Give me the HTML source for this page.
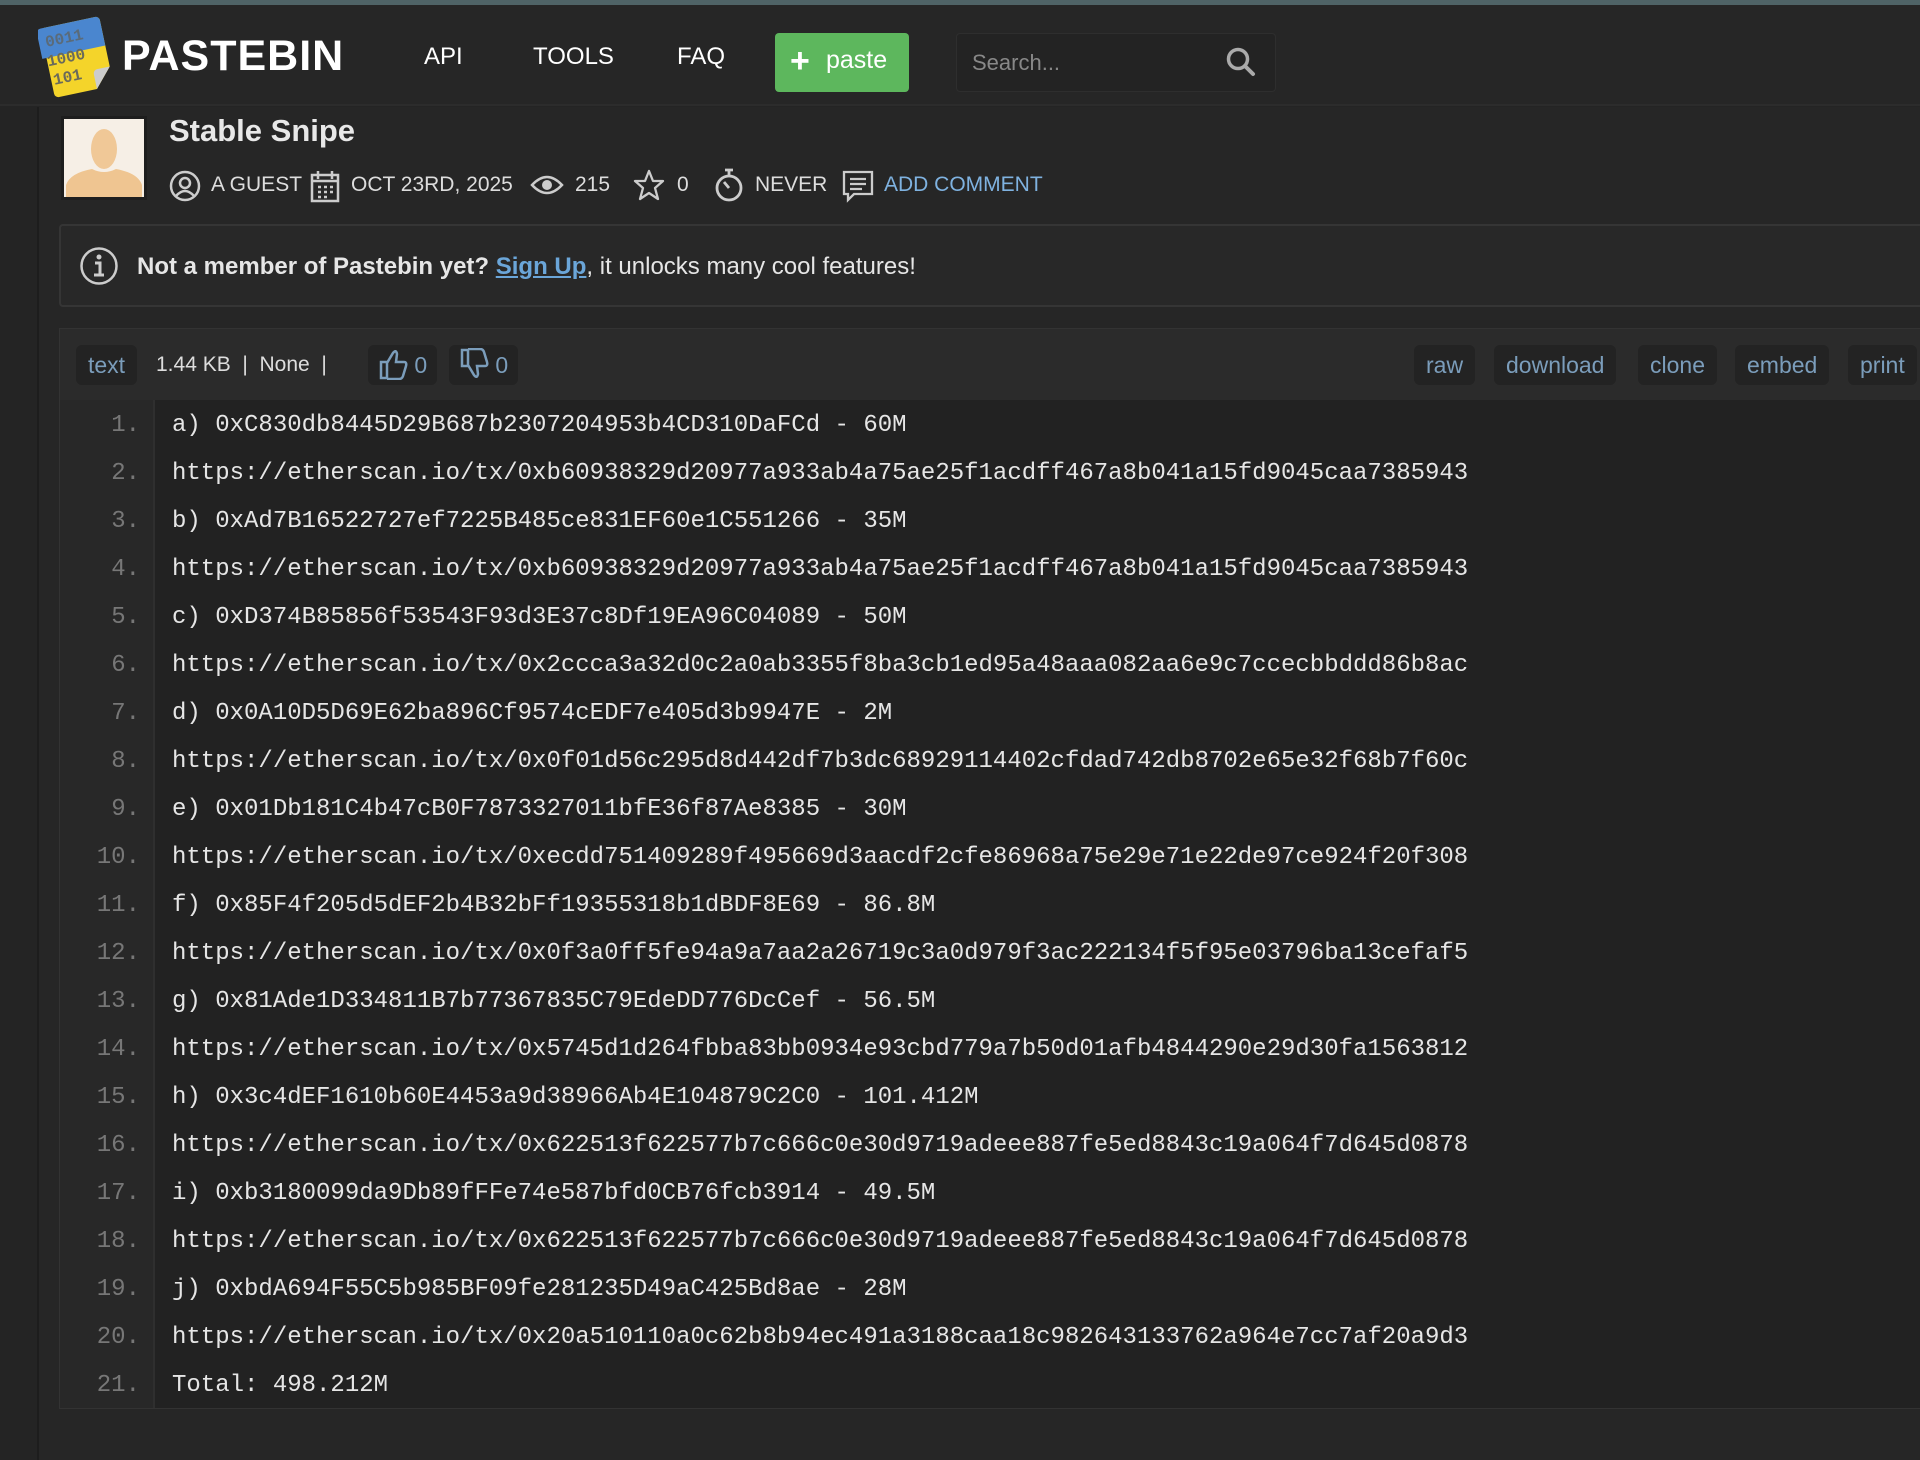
<!DOCTYPE html>
<html><head><meta charset="utf-8"><style>
*{margin:0;padding:0;box-sizing:border-box}
body{width:1920px;height:1460px;background:#242424;font-family:"Liberation Sans",sans-serif;color:#ddd;position:relative;overflow:hidden}
.top{position:absolute;left:0;top:0;width:1920px;height:5px;background:#4f6366}
.hdr{position:absolute;left:0;top:5px;width:1920px;height:101px;background:#262626;border-bottom:2px solid #2c2c2c}
.a{position:absolute;white-space:nowrap}
.side{position:absolute;left:37px;top:107px;width:2px;height:1353px;background:#1d1d1d}
.main{position:absolute;left:39px;top:107px;width:1881px;height:1353px;background:#262626}
.nav{font-size:24px;color:#fff;top:38px}
.btn{left:775px;top:28px;width:134px;height:59px;background:#5db75d;border-radius:4px;color:#fff;font-size:25px}
.search{left:956px;top:28px;width:320px;height:59px;background:#232323;border:1px solid #2e2e2e;border-radius:4px}
.meta{top:173px;font-size:21px;color:#ddd}
.note{left:59px;top:224px;width:1870px;height:83px;border:2px solid #353535;border-radius:4px;background:#282828}
.ch{left:59px;top:328px;width:1870px;height:72px;background:#2b2b2b;border:1px solid #333;border-bottom:none}
.pill{position:absolute;top:16px;height:40px;background:#232323;border-radius:6px;color:#7b9dbb;font-size:23px;line-height:40px;padding:0 12px}
.code{left:59px;top:400px;width:1870px;height:1009px;background:#222;border:1px solid #333;border-top:none}
.nums{position:absolute;left:0;top:0;width:95px;height:1008px;background:#282828;border-right:2px solid #2f2f2f}
.ln{position:absolute;font-family:"Liberation Mono",monospace;font-size:24px;white-space:pre;line-height:48px}
.ln.n{color:#777;text-align:right;width:80px}
.ln.c{left:112px;color:#e6e6e6}
</style></head><body>
<div class="top"></div>
<div class="hdr">
 <svg class="a" style="left:38px;top:8px" width="78" height="88" viewBox="0 0 72 82">
  <g transform="rotate(-12 36 41)">
   <path d="M8 8 h52 a4 4 0 0 1 4 4 v44 l-16 18 h-36 a4 4 0 0 1 -4 -4 v-58 a4 4 0 0 1 4 -4z" fill="#f4d42a"/>
   <path d="M8 8 h52 a4 4 0 0 1 4 4 v24 h-60 v-24 a4 4 0 0 1 4 -4z" fill="#4a86cf"/>
   <path d="M64 56 l-16 18 v-14 a4 4 0 0 1 4 -4z" fill="#ccc"/>
   <text x="10" y="26" font-family="Liberation Mono" font-weight="bold" font-size="15" fill="#5a6b7a">0011</text>
   <text x="8" y="44" font-family="Liberation Mono" font-weight="bold" font-size="15" fill="#6a6a5a">1000</text>
   <text x="10" y="62" font-family="Liberation Mono" font-weight="bold" font-size="15" fill="#6a6a5a">101</text>
  </g>
 </svg>
 <div class="a" style="left:122px;top:27px;font-size:43px;font-weight:bold;color:#fff;letter-spacing:1px">PASTEBIN</div>
 <div class="a nav" style="left:424px">API</div>
 <div class="a nav" style="left:533px">TOOLS</div>
 <div class="a nav" style="left:677px">FAQ</div>
 <div class="a btn"><span style="position:absolute;left:15px;top:11px;font-size:34px;font-weight:bold;line-height:34px">+</span><span style="position:absolute;left:51px;top:13px">paste</span></div>
 <div class="a search"><span style="position:absolute;left:15px;top:16px;font-size:22px;color:#888">Search...</span>
  <svg style="position:absolute;left:268px;top:12px" width="32" height="32" viewBox="0 0 32 32"><circle cx="13" cy="13" r="9.5" stroke="#aaa" stroke-width="3.5" fill="none"/><path d="M20 20 L28 28" stroke="#aaa" stroke-width="4" stroke-linecap="round"/></svg></div>
</div>
<div class="side"></div>
<div class="main"></div>
<div class="a" style="left:61px;top:116px;width:86px;height:84px;background:#1e1e1e;padding:3px">
 <svg width="80" height="78" viewBox="0 0 80 78"><rect width="80" height="78" fill="#f6efe6"/><ellipse cx="40" cy="30" rx="13" ry="20" fill="#f0c897"/><path d="M2 78 v-12 q4 -12 26 -16 q12 6 24 0 q22 4 26 16 v12z" fill="#efc591"/></svg>
</div>
<div class="a" style="left:169px;top:113px;font-size:31px;font-weight:bold;color:#e8e8e8">Stable Snipe</div>
<svg class="a" style="left:169px;top:170px" width="32" height="32" viewBox="0 0 32 32"><circle cx="16" cy="16" r="14" stroke="#ccc" stroke-width="2.5" fill="none"/><circle cx="16" cy="13" r="5" stroke="#ccc" stroke-width="2.5" fill="none"/><path d="M7 26 q9 -10 18 0" stroke="#ccc" stroke-width="2.5" fill="none"/></svg>
<div class="a meta" style="left:211px">A GUEST</div>
<svg class="a" style="left:310px;top:169px" width="30" height="34" viewBox="0 0 30 34"><rect x="2" y="6" width="26" height="26" stroke="#ccc" stroke-width="2.5" fill="none"/><path d="M2 12 h26 M8 2 v8 M22 2 v8" stroke="#ccc" stroke-width="2.5"/><path d="M8 18h3M14 18h3M20 18h3M8 23h3M14 23h3M20 23h3M8 28h3M14 28h3" stroke="#ccc" stroke-width="2.5"/></svg>
<div class="a meta" style="left:351px">OCT 23RD, 2025</div>
<svg class="a" style="left:530px;top:172px" width="34" height="26" viewBox="0 0 34 26"><path d="M2 13 q15 -16 30 0 q-15 16 -30 0z" stroke="#ccc" stroke-width="2.5" fill="none"/><circle cx="17" cy="13" r="5" fill="#ccc"/></svg>
<div class="a meta" style="left:575px">215</div>
<svg class="a" style="left:633px;top:169px" width="32" height="32" viewBox="0 0 32 32"><path d="M16 2 l4 10 h10 l-8 7 3 11 -9 -6 -9 6 3 -11 -8 -7 h10z" stroke="#ccc" stroke-width="2.3" fill="none" stroke-linejoin="round"/></svg>
<div class="a meta" style="left:677px">0</div>
<svg class="a" style="left:713px;top:167px" width="32" height="36" viewBox="0 0 32 36"><circle cx="16" cy="21" r="12" stroke="#ccc" stroke-width="2.8" fill="none"/><path d="M12 3h8M16 3v6M16 21 l-5 -6" stroke="#ccc" stroke-width="2.8"/></svg>
<div class="a meta" style="left:755px">NEVER</div>
<svg class="a" style="left:842px;top:170px" width="32" height="34" viewBox="0 0 32 34"><path d="M2 2 h28 v22 h-18 l-6 6 v-6 h-4z" stroke="#ccc" stroke-width="2.3" fill="none"/><path d="M8 9h16M8 14h16M8 19h12" stroke="#ccc" stroke-width="2.3"/></svg>
<div class="a meta" style="left:884px;color:#7fb2e0">ADD COMMENT</div>
<div class="a note">
 <svg style="position:absolute;left:18px;top:20px" width="40" height="40" viewBox="0 0 40 40"><circle cx="20" cy="20" r="17.5" stroke="#ccc" stroke-width="2.5" fill="none"/><circle cx="20" cy="11" r="2.5" fill="#ccc"/><path d="M16 17h5v12M15 29h10" stroke="#ccc" stroke-width="3" fill="none"/></svg>
 <div class="a" style="left:76px;top:27px;font-size:24px;font-weight:bold;color:#e6e6e6">Not a member of Pastebin yet? <span style="color:#6ba6d9;text-decoration:underline">Sign Up</span><span style="font-weight:normal">, it unlocks many cool features!</span></div>
</div>
<div class="a ch">
 <div class="pill" style="left:16px">text</div>
 <div class="a" style="left:96px;top:24px;font-size:21px;color:#ddd">1.44 KB &nbsp;|&nbsp; None &nbsp;|</div>
 <div class="pill" style="left:308px;padding:0 10px">
  <svg width="30" height="32" viewBox="0 0 30 32" style="vertical-align:-7px"><path d="M3 14h6v16h-6zM9 15 l6 -10 q3 -4 4 1 l-1 8 h8 q3 0 2 4 l-3 10 q-1 3 -4 3 h-12" stroke="#7b9dbb" stroke-width="2.5" fill="none"/></svg> 0</div>
 <div class="pill" style="left:389px;padding:0 10px">
  <svg width="30" height="32" viewBox="0 0 30 32" style="vertical-align:-7px;transform:scaleY(-1)"><path d="M3 14h6v16h-6zM9 15 l6 -10 q3 -4 4 1 l-1 8 h8 q3 0 2 4 l-3 10 q-1 3 -4 3 h-12" stroke="#7b9dbb" stroke-width="2.5" fill="none"/></svg> 0</div>
 <div class="pill" style="left:1354px">raw</div>
 <div class="pill" style="left:1434px">download</div>
 <div class="pill" style="left:1578px">clone</div>
 <div class="pill" style="left:1675px">embed</div>
 <div class="pill" style="left:1788px">print</div>
</div>
<div class="a code">
 <div class="nums"></div>
 <div class="ln n" style="top:2px;left:0">1.<br>2.<br>3.<br>4.<br>5.<br>6.<br>7.<br>8.<br>9.<br>10.<br>11.<br>12.<br>13.<br>14.<br>15.<br>16.<br>17.<br>18.<br>19.<br>20.<br>21.</div>
 <div class="ln c" style="top:2px">a) 0xC830db8445D29B687b2307204953b4CD310DaFCd - 60M
https://etherscan.io/tx/0xb60938329d20977a933ab4a75ae25f1acdff467a8b041a15fd9045caa7385943
b) 0xAd7B16522727ef7225B485ce831EF60e1C551266 - 35M
https://etherscan.io/tx/0xb60938329d20977a933ab4a75ae25f1acdff467a8b041a15fd9045caa7385943
c) 0xD374B85856f53543F93d3E37c8Df19EA96C04089 - 50M
https://etherscan.io/tx/0x2ccca3a32d0c2a0ab3355f8ba3cb1ed95a48aaa082aa6e9c7ccecbbddd86b8ac
d) 0x0A10D5D69E62ba896Cf9574cEDF7e405d3b9947E - 2M
https://etherscan.io/tx/0x0f01d56c295d8d442df7b3dc68929114402cfdad742db8702e65e32f68b7f60c
e) 0x01Db181C4b47cB0F7873327011bfE36f87Ae8385 - 30M
https://etherscan.io/tx/0xecdd751409289f495669d3aacdf2cfe86968a75e29e71e22de97ce924f20f308
f) 0x85F4f205d5dEF2b4B32bFf19355318b1dBDF8E69 - 86.8M
https://etherscan.io/tx/0x0f3a0ff5fe94a9a7aa2a26719c3a0d979f3ac222134f5f95e03796ba13cefaf5
g) 0x81Ade1D334811B7b77367835C79EdeDD776DcCef - 56.5M
https://etherscan.io/tx/0x5745d1d264fbba83bb0934e93cbd779a7b50d01afb4844290e29d30fa1563812
h) 0x3c4dEF1610b60E4453a9d38966Ab4E104879C2C0 - 101.412M
https://etherscan.io/tx/0x622513f622577b7c666c0e30d9719adeee887fe5ed8843c19a064f7d645d0878
i) 0xb3180099da9Db89fFFe74e587bfd0CB76fcb3914 - 49.5M
https://etherscan.io/tx/0x622513f622577b7c666c0e30d9719adeee887fe5ed8843c19a064f7d645d0878
j) 0xbdA694F55C5b985BF09fe281235D49aC425Bd8ae - 28M
https://etherscan.io/tx/0x20a510110a0c62b8b94ec491a3188caa18c982643133762a964e7cc7af20a9d3
Total: 498.212M</div>
</div>
</body></html>
